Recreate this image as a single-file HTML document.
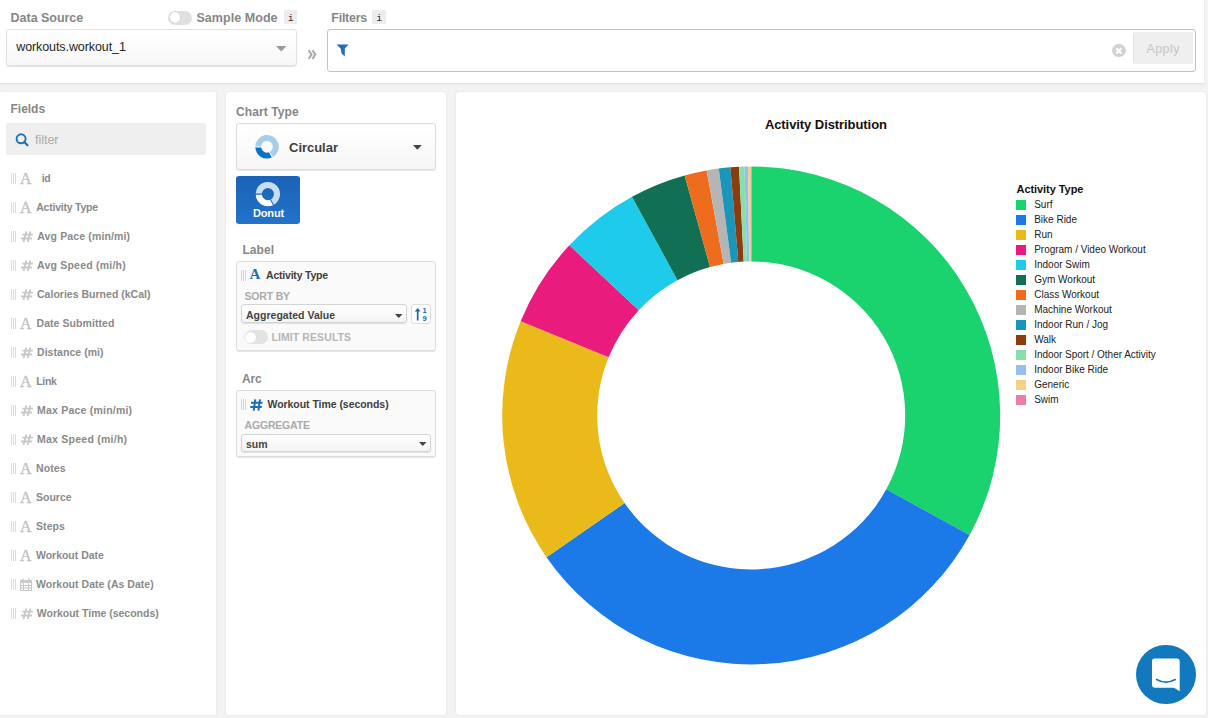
<!DOCTYPE html>
<html><head><meta charset="utf-8"><style>
*{box-sizing:border-box}
html,body{margin:0;padding:0}
body{width:1208px;height:718px;position:relative;overflow:hidden;background:#f3f3f3;font-family:'Liberation Sans', sans-serif}
.t{position:absolute;white-space:nowrap}
.abs{position:absolute}
.grip{position:absolute;left:11px;width:5px;height:11px;margin-top:0.5px;border-left:1px solid #dcdcdc;border-right:1px solid #dcdcdc}
.grip:after{content:"";position:absolute;left:1px;top:0;width:1px;height:100%;background:#dcdcdc}
.ia{position:absolute;left:20px;font-family:'Liberation Serif', serif;font-size:16px;line-height:16px;color:#bfbfbf;-webkit-text-stroke:0.35px #c4c4c4}
.ih{position:absolute;left:19.5px}
.sw{position:absolute;left:1015.8px;width:10px;height:9.7px}
</style></head><body>
<!-- top bar -->
<div class="abs" style="left:0;top:0;width:1205px;height:83.5px;background:#fff;border-bottom:1.5px solid #e3e3e3;box-shadow:0 1px 1px rgba(0,0,0,0.03)"></div>
<div class="abs" style="left:1204px;top:0;width:1px;height:82px;background:#ececec"></div>
<!-- toggle -->
<div class="abs" style="left:168.2px;top:11px;width:23.6px;height:13.7px;border-radius:7px;background:#e0e0e0"></div>
<div class="abs" style="left:169.5px;top:12.4px;width:10.8px;height:10.8px;border-radius:50%;background:#fff;box-shadow:0 0 0 0.5px #cfcfcf"></div>
<div class="abs" style="left:283.6px;top:10.4px;width:13.6px;height:14px;background:#ececec;border-radius:1px"></div>
<div class="abs" style="left:372.4px;top:10.4px;width:13.8px;height:14px;background:#ececec;border-radius:1px"></div>
<div class="t" style="left:287.9px;top:15px;font-family:'Liberation Mono', monospace;font-size:9px;line-height:9px;color:#2a2a2a">i</div>
<div class="t" style="left:376.6px;top:15px;font-family:'Liberation Mono', monospace;font-size:9px;line-height:9px;color:#2a2a2a">i</div>
<!-- data source select -->
<div class="abs" style="left:6.4px;top:29.2px;width:290.4px;height:36.6px;border:1px solid #e2e2e2;border-radius:3px;background:linear-gradient(#ffffff,#f7f7f7);box-shadow:0 1px 1px rgba(0,0,0,0.12)"></div>
<svg class="abs" style="left:276px;top:45.5px" width="11" height="6"><path d="M0 0H10.5L5.25 5.5Z" fill="#9b9b9b"/></svg>
<!-- chevrons -->
<svg class="abs" style="left:307px;top:49px" width="11" height="12" viewBox="0 0 11 12"><path d="M1.6 1.3L4.6 5.6L1.6 9.9M5.4 1.3L8.4 5.6L5.4 9.9" stroke="#aaaaaa" stroke-width="2" fill="none"/></svg>
<!-- filter box -->
<div class="abs" style="left:327.4px;top:29.2px;width:868.4px;height:42.8px;border:1px solid #c2c2c2;border-radius:3px;background:#fff"></div>
<svg class="abs" style="left:335.5px;top:44.2px" width="13" height="13" viewBox="0 0 13 13"><path d="M0.5 0.4H12.5L8.8 4.6V12.5L5.6 9.5L4.6 4.6Z" fill="#1a6fc0"/></svg>
<div class="abs" style="left:1112.4px;top:43.6px;width:13.4px;height:13.4px;border-radius:50%;background:#d2d2d2"></div>
<svg class="abs" style="left:1112.4px;top:43.6px" width="14" height="14" viewBox="0 0 14 14"><path d="M4.3 4.3L9.4 9.4M9.4 4.3L4.3 9.4" stroke="#fff" stroke-width="2.1"/></svg>
<div class="abs" style="left:1133.1px;top:32px;width:60px;height:31.8px;background:#efefef;border-left:1px solid #e4e4e4;border-radius:3px 0 0 3px"></div>

<!-- panels -->
<div class="abs" style="left:0;top:92px;width:216.2px;height:623px;background:#fff;box-shadow:0 0 2px rgba(0,0,0,0.08)"></div>
<div class="abs" style="left:226px;top:92px;width:220px;height:623px;background:#fff;border-radius:3px;box-shadow:0 0 2px rgba(0,0,0,0.1)"></div>
<div class="abs" style="left:456px;top:92px;width:750.4px;height:623px;background:#fff;border-radius:3px;box-shadow:0 0 2px rgba(0,0,0,0.1)"></div>

<!-- filter input -->
<div class="abs" style="left:6.3px;top:123.1px;width:199.9px;height:31.6px;background:#efefef;border-radius:2px"></div>
<svg class="abs" style="left:14px;top:132px" width="16" height="16" viewBox="0 0 16 16"><circle cx="7.1" cy="6.8" r="4.5" stroke="#1a72bf" stroke-width="1.9" fill="none"/><path d="M10.3 10L13.5 13.3" stroke="#1a72bf" stroke-width="2.1" stroke-linecap="round"/></svg>
<div class="grip" style="top:172.5px"></div>
<div class="ia" style="top:171.3px">A</div>
<div class="grip" style="top:201.5px"></div>
<div class="ia" style="top:200.3px">A</div>
<div class="grip" style="top:230.5px"></div>
<svg class="ih" style="top:230.5px" width="14" height="12" viewBox="0 0 14 12"><path d="M6.3 0.5L3.5 11.1M10.4 0.5L7.6 11.1M2.3 3.6H12.9M1 7.5H12.1" stroke="#c9c9c9" stroke-width="1.9" fill="none"/></svg>
<div class="grip" style="top:259.5px"></div>
<svg class="ih" style="top:259.5px" width="14" height="12" viewBox="0 0 14 12"><path d="M6.3 0.5L3.5 11.1M10.4 0.5L7.6 11.1M2.3 3.6H12.9M1 7.5H12.1" stroke="#c9c9c9" stroke-width="1.9" fill="none"/></svg>
<div class="grip" style="top:288.5px"></div>
<svg class="ih" style="top:288.5px" width="14" height="12" viewBox="0 0 14 12"><path d="M6.3 0.5L3.5 11.1M10.4 0.5L7.6 11.1M2.3 3.6H12.9M1 7.5H12.1" stroke="#c9c9c9" stroke-width="1.9" fill="none"/></svg>
<div class="grip" style="top:317.5px"></div>
<div class="ia" style="top:316.3px">A</div>
<div class="grip" style="top:346.5px"></div>
<svg class="ih" style="top:346.5px" width="14" height="12" viewBox="0 0 14 12"><path d="M6.3 0.5L3.5 11.1M10.4 0.5L7.6 11.1M2.3 3.6H12.9M1 7.5H12.1" stroke="#c9c9c9" stroke-width="1.9" fill="none"/></svg>
<div class="grip" style="top:375.5px"></div>
<div class="ia" style="top:374.3px">A</div>
<div class="grip" style="top:404.5px"></div>
<svg class="ih" style="top:404.5px" width="14" height="12" viewBox="0 0 14 12"><path d="M6.3 0.5L3.5 11.1M10.4 0.5L7.6 11.1M2.3 3.6H12.9M1 7.5H12.1" stroke="#c9c9c9" stroke-width="1.9" fill="none"/></svg>
<div class="grip" style="top:433.5px"></div>
<svg class="ih" style="top:433.5px" width="14" height="12" viewBox="0 0 14 12"><path d="M6.3 0.5L3.5 11.1M10.4 0.5L7.6 11.1M2.3 3.6H12.9M1 7.5H12.1" stroke="#c9c9c9" stroke-width="1.9" fill="none"/></svg>
<div class="grip" style="top:462.5px"></div>
<div class="ia" style="top:461.3px">A</div>
<div class="grip" style="top:491.5px"></div>
<div class="ia" style="top:490.3px">A</div>
<div class="grip" style="top:520.5px"></div>
<div class="ia" style="top:519.3px">A</div>
<div class="grip" style="top:549.5px"></div>
<div class="ia" style="top:548.3px">A</div>
<div class="grip" style="top:578.5px"></div>
<svg class="abs" style="left:20px;top:578px" width="13" height="14" viewBox="0 0 13 14"><g fill="none" stroke="#c6c6c6" stroke-width="1"><rect x="0.5" y="2.5" width="11" height="10"/><path d="M0.5 7.5H11.5M0.5 10H11.5M3.5 5V12.5M8.5 5V12.5"/></g><rect x="0.5" y="2.5" width="11" height="2.5" fill="#cccccc"/><path d="M3 0.6V3M9 0.6V3" stroke="#c6c6c6" stroke-width="1.4"/></svg>
<div class="grip" style="top:607.5px"></div>
<svg class="ih" style="top:607.5px" width="14" height="12" viewBox="0 0 14 12"><path d="M6.3 0.5L3.5 11.1M10.4 0.5L7.6 11.1M2.3 3.6H12.9M1 7.5H12.1" stroke="#c9c9c9" stroke-width="1.9" fill="none"/></svg>

<!-- chart type -->
<div class="abs" style="left:236.1px;top:123.1px;width:199.8px;height:46.9px;border:1px solid #dcdcdc;border-radius:3px;background:linear-gradient(#ffffff,#f6f6f6);box-shadow:0 1px 1px rgba(0,0,0,0.1)"></div>
<svg class="abs" style="left:252px;top:132px" width="30" height="30" viewBox="0 0 30 30">
<path d="M3.3 14.5A11.8 11.8 0 1 1 20.7 25.1L17.8 19.8A5.8 5.8 0 1 0 9.2 14.5Z" fill="#a8cdea"/>
<path d="M3.3 15.6A11.8 11.8 0 0 0 19.8 25.6L17 20.3A5.8 5.8 0 0 1 9.2 15.6Z" fill="#0a72c3"/>
</svg>
<svg class="abs" style="left:412.5px;top:144.6px" width="9" height="5"><path d="M0 0H8.8L4.4 4.7Z" fill="#444"/></svg>
<div class="abs" style="left:236.2px;top:175.9px;width:63.7px;height:47.9px;border-radius:3px;background:linear-gradient(#1a63b6,#2173cb)"></div>
<svg class="abs" style="left:253px;top:179px" width="30" height="30" viewBox="0 0 30 30">
<path d="M2.7 14.5A12.2 12.2 0 1 1 20.9 25.7L17.9 20.3A6 6 0 1 0 8.9 14.5Z" fill="#c9def0"/>
<path d="M2.7 15.7A12.2 12.2 0 0 0 20 26.2L17 20.8A6 6 0 0 1 8.9 15.7Z" fill="#ffffff"/>
</svg>
<!-- label card -->
<div class="abs" style="left:236px;top:261px;width:200px;height:90px;border:1px solid #dddddd;border-radius:3px;background:#fafafa;box-shadow:0 1px 1px rgba(0,0,0,0.1)"></div>
<div class="abs" style="left:241px;top:270px;width:5px;height:10.5px;border-left:1px solid #d4d4d4;border-right:1px solid #d4d4d4"></div>
<div class="abs" style="left:243px;top:270px;width:1px;height:10.5px;background:#d4d4d4"></div>
<div class="t" style="left:249.5px;top:266.6px;font-family:'Liberation Serif', serif;font-size:15px;line-height:15px;color:#1a6fb7;font-weight:bold">A</div>
<div class="abs" style="left:240.8px;top:304.3px;width:166.2px;height:19px;border:1px solid #d4d4d4;border-radius:3px;background:linear-gradient(#ffffff,#f4f4f4);box-shadow:0 1px 1px rgba(0,0,0,0.1)"></div>
<svg class="abs" style="left:394.6px;top:313.5px" width="8" height="5"><path d="M0 0H7.5L3.75 4Z" fill="#444"/></svg>
<div class="abs" style="left:411px;top:304px;width:20px;height:19.5px;border:1px solid #dddddd;border-radius:3px;background:#fff"></div>
<svg class="abs" style="left:414px;top:307px" width="14" height="15" viewBox="0 0 14 15"><path d="M3.7 13.5V3" stroke="#1a6aa8" stroke-width="1.7"/><path d="M0.8 4.6L3.7 1L6.6 4.6Z" fill="#1a6aa8"/></svg>
<div class="t" style="left:422.6px;top:306.8px;font-size:7.5px;line-height:7.5px;color:#1a6aa8;font-weight:bold">1</div>
<div class="t" style="left:422.6px;top:314.6px;font-size:7.5px;line-height:7.5px;color:#1a6aa8;font-weight:bold">9</div>
<div class="abs" style="left:244.5px;top:330.3px;width:23px;height:14.1px;border-radius:7px;background:#e3e3e3"></div>
<div class="abs" style="left:245.2px;top:332px;width:10.8px;height:10.8px;border-radius:50%;background:#fff;box-shadow:0 0 0 0.5px #d5d5d5"></div>
<!-- arc card -->
<div class="abs" style="left:236px;top:390px;width:200px;height:67px;border:1px solid #dddddd;border-radius:3px;background:#fafafa;box-shadow:0 1px 1px rgba(0,0,0,0.1)"></div>
<div class="abs" style="left:241px;top:399px;width:5px;height:10.5px;border-left:1px solid #d4d4d4;border-right:1px solid #d4d4d4"></div>
<div class="abs" style="left:243px;top:399px;width:1px;height:10.5px;background:#d4d4d4"></div>
<svg class="abs" style="left:249.5px;top:398.5px" width="13" height="12" viewBox="0 0 13 12"><path d="M5.3 0.3L3.7 11.7M10 0.3L8.4 11.7M1 3.8H12.5M0.3 8H11.8" stroke="#1a6fb7" stroke-width="2" fill="none"/></svg>
<div class="abs" style="left:240.8px;top:433.5px;width:190.3px;height:18.8px;border:1px solid #d4d4d4;border-radius:3px;background:linear-gradient(#ffffff,#f4f4f4);box-shadow:0 1px 1px rgba(0,0,0,0.1)"></div>
<svg class="abs" style="left:418.8px;top:442.3px" width="8" height="5"><path d="M0 0H7.5L3.75 4Z" fill="#444"/></svg>

<!-- donut -->
<svg class="abs" style="left:0;top:0" width="1208" height="718" viewBox="0 0 1208 718">
<path d="M751.72,166.40A249.0,249.0 0 0 1 969.61,534.98L886.28,489.35A154.0,154.0 0 0 0 751.52,261.40Z" fill="#1ad36e"/>
<path d="M969.61,534.98A249.0,249.0 0 0 1 546.49,557.15L624.59,503.07A154.0,154.0 0 0 0 886.28,489.35Z" fill="#1c7ae8"/>
<path d="M546.49,557.15A249.0,249.0 0 0 1 520.66,321.32L608.62,357.21A154.0,154.0 0 0 0 624.59,503.07Z" fill="#e9ba19"/>
<path d="M520.66,321.32A249.0,249.0 0 0 1 569.39,245.26L638.76,310.18A154.0,154.0 0 0 0 608.62,357.21Z" fill="#e91b7c"/>
<path d="M569.39,245.26A249.0,249.0 0 0 1 632.01,196.78L677.48,280.19A154.0,154.0 0 0 0 638.76,310.18Z" fill="#1ecbea"/>
<path d="M632.01,196.78A249.0,249.0 0 0 1 684.66,175.46L710.05,267.00A154.0,154.0 0 0 0 677.48,280.19Z" fill="#116f54"/>
<path d="M684.66,175.46A249.0,249.0 0 0 1 706.68,170.41L723.66,263.88A154.0,154.0 0 0 0 710.05,267.00Z" fill="#ee6c1e"/>
<path d="M706.68,170.41A249.0,249.0 0 0 1 718.70,168.53L731.10,262.72A154.0,154.0 0 0 0 723.66,263.88Z" fill="#b5b5b5"/>
<path d="M718.70,168.53A249.0,249.0 0 0 1 730.36,167.27L738.31,261.94A154.0,154.0 0 0 0 731.10,262.72Z" fill="#1b96b8"/>
<path d="M730.36,167.27A249.0,249.0 0 0 1 739.04,166.70L743.68,261.58A154.0,154.0 0 0 0 738.31,261.94Z" fill="#8d3c10"/>
<path d="M739.04,166.70A249.0,249.0 0 0 1 744.46,166.49L747.03,261.46A154.0,154.0 0 0 0 743.68,261.58Z" fill="#86e0ac"/>
<path d="M744.46,166.49A249.0,249.0 0 0 1 747.94,166.42L749.18,261.41A154.0,154.0 0 0 0 747.03,261.46Z" fill="#98bdf2"/>
<path d="M747.94,166.42A249.0,249.0 0 0 1 750.77,166.40L750.93,261.40A154.0,154.0 0 0 0 749.18,261.41Z" fill="#f2d286"/>
<path d="M750.77,166.40A249.0,249.0 0 0 1 751.72,166.40L751.52,261.40A154.0,154.0 0 0 0 750.93,261.40Z" fill="#eb7fa6"/>
</svg>
<div class="sw" style="top:200.0px;background:#1ad36e"></div>
<div class="sw" style="top:215.0px;background:#1c7ae8"></div>
<div class="sw" style="top:230.0px;background:#e9ba19"></div>
<div class="sw" style="top:245.0px;background:#e91b7c"></div>
<div class="sw" style="top:260.0px;background:#1ecbea"></div>
<div class="sw" style="top:275.0px;background:#116f54"></div>
<div class="sw" style="top:290.0px;background:#ee6c1e"></div>
<div class="sw" style="top:305.0px;background:#b5b5b5"></div>
<div class="sw" style="top:320.0px;background:#1b96b8"></div>
<div class="sw" style="top:335.0px;background:#8d3c10"></div>
<div class="sw" style="top:350.0px;background:#86e0ac"></div>
<div class="sw" style="top:365.0px;background:#98bdf2"></div>
<div class="sw" style="top:380.0px;background:#f2d286"></div>
<div class="sw" style="top:395.0px;background:#eb7fa6"></div>
<!-- chat -->
<div class="abs" style="left:1136.3px;top:644.9px;width:59.5px;height:59.5px;border-radius:50%;background:#1279be"></div>
<svg class="abs" style="left:1150px;top:656px" width="32" height="38" viewBox="0 0 32 38">
<path d="M5 2.5H27A2.5 2.5 0 0 1 29.7 5V35.2L24 31.8H5A3 3 0 0 1 2 28.8V5A2.5 2.5 0 0 1 5 2.5Z" fill="#fff"/>
<path d="M6 23.3Q16 29 25.8 23.3" stroke="#1279be" stroke-width="1.6" fill="none"/>
</svg>
<div class="t" style="left:10.60px;top:12.00px;font-size:12.5px;line-height:12.5px;font-weight:bold;color:#878787;letter-spacing:-0.031px;">Data Source</div>
<div class="t" style="left:196.40px;top:12.00px;font-size:12.5px;line-height:12.5px;font-weight:bold;color:#878787;letter-spacing:0.057px;">Sample Mode</div>
<div class="t" style="left:331.30px;top:12.00px;font-size:12.5px;line-height:12.5px;font-weight:bold;color:#878787;letter-spacing:-0.259px;">Filters</div>
<div class="t" style="left:16.20px;top:41.00px;font-size:12.5px;line-height:12.5px;font-weight:normal;color:#262626;letter-spacing:-0.087px;">workouts.workout_1</div>
<div class="t" style="left:1146.40px;top:43.00px;font-size:12.5px;line-height:12.5px;font-weight:normal;color:#c6c6c6;letter-spacing:0.446px;">Apply</div>
<div class="t" style="left:10.50px;top:103.00px;font-size:12px;line-height:12px;font-weight:bold;color:#878787;letter-spacing:-0.013px;">Fields</div>
<div class="t" style="left:35.00px;top:134.00px;font-size:12.5px;line-height:12.5px;font-weight:normal;color:#ababab;letter-spacing:-0.019px;">filter</div>
<div class="t" style="left:41.70px;top:173.00px;font-size:10.5px;line-height:10.5px;font-weight:bold;color:#8a8a8a;letter-spacing:-0.316px;">id</div>
<div class="t" style="left:36.20px;top:202.00px;font-size:10.5px;line-height:10.5px;font-weight:bold;color:#8a8a8a;letter-spacing:-0.221px;">Activity Type</div>
<div class="t" style="left:37.30px;top:231.00px;font-size:10.5px;line-height:10.5px;font-weight:bold;color:#8a8a8a;letter-spacing:0.133px;">Avg Pace (min/mi)</div>
<div class="t" style="left:37.00px;top:260.00px;font-size:10.5px;line-height:10.5px;font-weight:bold;color:#8a8a8a;letter-spacing:0.221px;">Avg Speed (mi/h)</div>
<div class="t" style="left:37.00px;top:289.00px;font-size:10.5px;line-height:10.5px;font-weight:bold;color:#8a8a8a;letter-spacing:0.014px;">Calories Burned (kCal)</div>
<div class="t" style="left:36.50px;top:318.00px;font-size:10.5px;line-height:10.5px;font-weight:bold;color:#8a8a8a;letter-spacing:0.064px;">Date Submitted</div>
<div class="t" style="left:37.00px;top:347.00px;font-size:10.5px;line-height:10.5px;font-weight:bold;color:#8a8a8a;letter-spacing:0.051px;">Distance (mi)</div>
<div class="t" style="left:36.20px;top:376.00px;font-size:10.5px;line-height:10.5px;font-weight:bold;color:#8a8a8a;letter-spacing:-0.321px;">Link</div>
<div class="t" style="left:37.00px;top:405.00px;font-size:10.5px;line-height:10.5px;font-weight:bold;color:#8a8a8a;letter-spacing:0.217px;">Max Pace (min/mi)</div>
<div class="t" style="left:37.00px;top:434.00px;font-size:10.5px;line-height:10.5px;font-weight:bold;color:#8a8a8a;letter-spacing:0.247px;">Max Speed (mi/h)</div>
<div class="t" style="left:36.00px;top:463.00px;font-size:10.5px;line-height:10.5px;font-weight:bold;color:#8a8a8a;letter-spacing:0.126px;">Notes</div>
<div class="t" style="left:36.00px;top:492.00px;font-size:10.5px;line-height:10.5px;font-weight:bold;color:#8a8a8a;letter-spacing:0.001px;">Source</div>
<div class="t" style="left:36.00px;top:521.00px;font-size:10.5px;line-height:10.5px;font-weight:bold;color:#8a8a8a;letter-spacing:0.081px;">Steps</div>
<div class="t" style="left:36.00px;top:550.00px;font-size:10.5px;line-height:10.5px;font-weight:bold;color:#8a8a8a;letter-spacing:-0.022px;">Workout Date</div>
<div class="t" style="left:36.00px;top:579.00px;font-size:10.5px;line-height:10.5px;font-weight:bold;color:#8a8a8a;letter-spacing:0.029px;">Workout Date (As Date)</div>
<div class="t" style="left:36.80px;top:608.00px;font-size:10.5px;line-height:10.5px;font-weight:bold;color:#8a8a8a;letter-spacing:-0.010px;">Workout Time (seconds)</div>
<div class="t" style="left:236.10px;top:106.00px;font-size:12px;line-height:12px;font-weight:bold;color:#878787;letter-spacing:0.091px;">Chart Type</div>
<div class="t" style="left:289.10px;top:141.00px;font-size:13px;line-height:13px;font-weight:bold;color:#404040;letter-spacing:-0.041px;">Circular</div>
<div class="t" style="left:253.10px;top:208.00px;font-size:11px;line-height:11px;font-weight:bold;color:#ffffff;letter-spacing:-0.193px;">Donut</div>
<div class="t" style="left:242.50px;top:244.00px;font-size:12px;line-height:12px;font-weight:bold;color:#878787;letter-spacing:0.032px;">Label</div>
<div class="t" style="left:266.00px;top:270.00px;font-size:10.5px;line-height:10.5px;font-weight:bold;color:#404040;letter-spacing:-0.206px;">Activity Type</div>
<div class="t" style="left:244.50px;top:291.00px;font-size:10.5px;line-height:10.5px;font-weight:bold;color:#ababab;letter-spacing:-0.182px;">SORT BY</div>
<div class="t" style="left:246.00px;top:310.00px;font-size:10.5px;line-height:10.5px;font-weight:bold;color:#454545;letter-spacing:0.019px;">Aggregated Value</div>
<div class="t" style="left:271.50px;top:332.00px;font-size:10.5px;line-height:10.5px;font-weight:bold;color:#b6b6b6;letter-spacing:0.088px;">LIMIT RESULTS</div>
<div class="t" style="left:242.00px;top:373.00px;font-size:12px;line-height:12px;font-weight:bold;color:#878787;letter-spacing:-0.203px;">Arc</div>
<div class="t" style="left:267.50px;top:399.00px;font-size:10.5px;line-height:10.5px;font-weight:bold;color:#404040;letter-spacing:-0.047px;">Workout Time (seconds)</div>
<div class="t" style="left:244.50px;top:420.00px;font-size:10.5px;line-height:10.5px;font-weight:bold;color:#ababab;letter-spacing:-0.177px;">AGGREGATE</div>
<div class="t" style="left:246.00px;top:439.00px;font-size:10.5px;line-height:10.5px;font-weight:bold;color:#454545;letter-spacing:-0.030px;">sum</div>
<div class="t" style="left:764.90px;top:118.00px;font-size:13px;line-height:13px;font-weight:bold;color:#111111;letter-spacing:-0.072px;">Activity Distribution</div>
<div class="t" style="left:1016.50px;top:184.00px;font-size:11px;line-height:11px;font-weight:bold;color:#111111;letter-spacing:-0.058px;">Activity Type</div>
<div class="t" style="left:1034.20px;top:200.00px;font-size:10px;line-height:10px;font-weight:normal;color:#222222;letter-spacing:0.000px;">Surf</div>
<div class="t" style="left:1034.20px;top:215.00px;font-size:10px;line-height:10px;font-weight:normal;color:#222222;letter-spacing:0.000px;">Bike Ride</div>
<div class="t" style="left:1034.20px;top:230.00px;font-size:10px;line-height:10px;font-weight:normal;color:#222222;letter-spacing:0.000px;">Run</div>
<div class="t" style="left:1034.20px;top:245.00px;font-size:10px;line-height:10px;font-weight:normal;color:#222222;letter-spacing:-0.018px;">Program / Video Workout</div>
<div class="t" style="left:1034.20px;top:260.00px;font-size:10px;line-height:10px;font-weight:normal;color:#222222;letter-spacing:0.000px;">Indoor Swim</div>
<div class="t" style="left:1034.20px;top:275.00px;font-size:10px;line-height:10px;font-weight:normal;color:#222222;letter-spacing:0.000px;">Gym Workout</div>
<div class="t" style="left:1034.20px;top:290.00px;font-size:10px;line-height:10px;font-weight:normal;color:#222222;letter-spacing:0.000px;">Class Workout</div>
<div class="t" style="left:1034.20px;top:305.00px;font-size:10px;line-height:10px;font-weight:normal;color:#222222;letter-spacing:0.000px;">Machine Workout</div>
<div class="t" style="left:1034.20px;top:320.00px;font-size:10px;line-height:10px;font-weight:normal;color:#222222;letter-spacing:0.000px;">Indoor Run / Jog</div>
<div class="t" style="left:1034.20px;top:335.00px;font-size:10px;line-height:10px;font-weight:normal;color:#222222;letter-spacing:0.000px;">Walk</div>
<div class="t" style="left:1034.20px;top:350.00px;font-size:10px;line-height:10px;font-weight:normal;color:#222222;letter-spacing:-0.029px;">Indoor Sport / Other Activity</div>
<div class="t" style="left:1034.20px;top:365.00px;font-size:10px;line-height:10px;font-weight:normal;color:#222222;letter-spacing:0.000px;">Indoor Bike Ride</div>
<div class="t" style="left:1034.20px;top:380.00px;font-size:10px;line-height:10px;font-weight:normal;color:#222222;letter-spacing:0.000px;">Generic</div>
<div class="t" style="left:1034.20px;top:395.00px;font-size:10px;line-height:10px;font-weight:normal;color:#222222;letter-spacing:0.000px;">Swim</div>
</body></html>
